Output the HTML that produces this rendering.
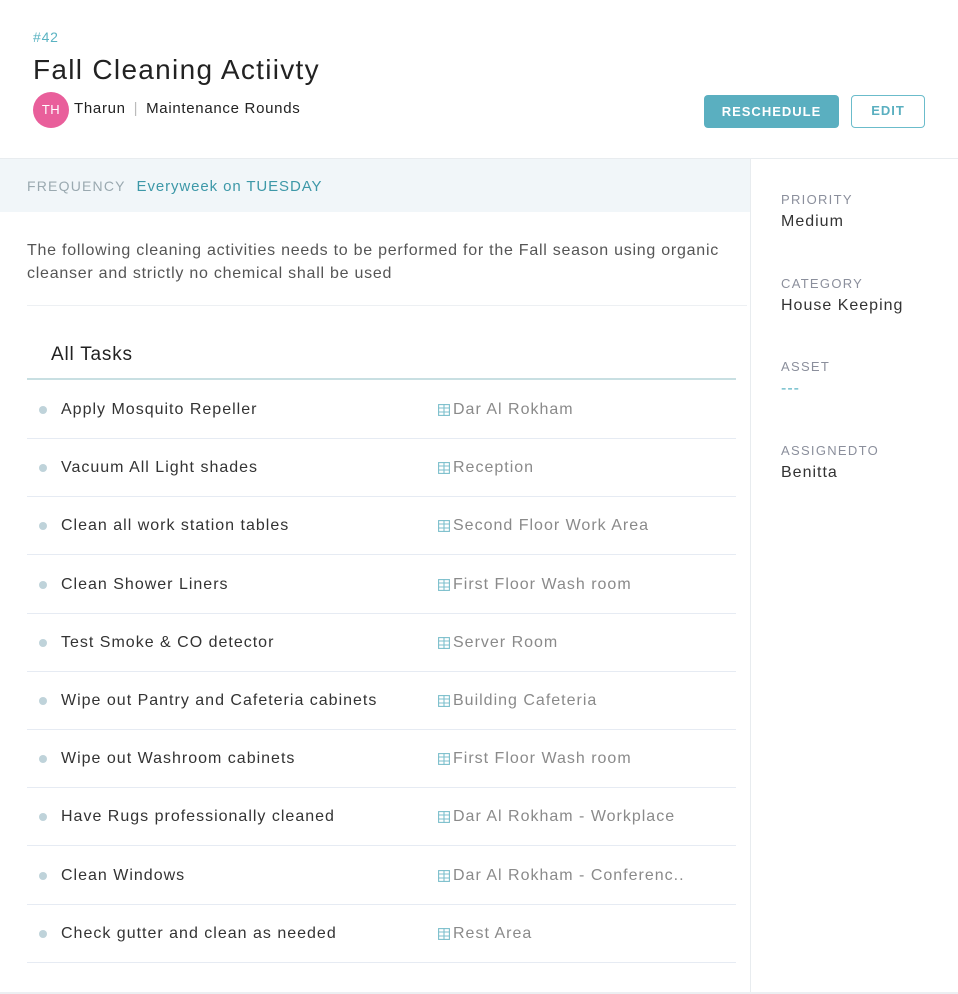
<!DOCTYPE html>
<html><head><style>
*{box-sizing:border-box;margin:0;padding:0}
body{width:958px;height:994px;background:#fff;font-family:"Liberation Sans",sans-serif;position:relative;overflow:hidden;color:#333}
.a{position:absolute}
.row{position:absolute;left:27px;width:709px;height:58px;border-bottom:1px solid #e6ebf3}
.row .d{position:absolute;left:12px;top:25px;width:8px;height:8px;border-radius:50%;background:#bfd3da}
.row .t{position:absolute;left:34px;top:20px;font-size:16px;color:#333;letter-spacing:1px}
.row .l{position:absolute;top:20px;font-size:16px;color:#8a8a8a;letter-spacing:1px}
.row svg{position:absolute;left:411px;top:23px}
.lab{position:absolute;left:781px;font-size:13px;color:#8b8f9c;letter-spacing:1.3px}
.val{position:absolute;left:781px;font-size:16px;color:#333;letter-spacing:1px}
</style></head><body>
<div class="a" style="left:33px;top:29px;font-size:14px;color:#5ab3c2;letter-spacing:.8px">#42</div>
<div class="a" style="left:33px;top:54px;font-size:28px;color:#222;letter-spacing:1.3px">Fall Cleaning Actiivty</div>
<div class="a" style="left:33px;top:92px;width:36px;height:36px;border-radius:50%;background:#e95f9b;color:#fff;font-size:13px;line-height:36px;text-align:center;letter-spacing:.5px">TH</div>
<div class="a" style="left:74px;top:100px;font-size:15px;color:#222;letter-spacing:.7px">Tharun <span style="color:#bbb;margin:0 3px">|</span> Maintenance Rounds</div>
<div class="a" style="left:704px;top:95px;width:135px;height:33px;background:#5aafc0;border-radius:4px;color:#fff;font-size:13px;font-weight:bold;letter-spacing:1px;line-height:33px;text-align:center">RESCHEDULE</div>
<div class="a" style="left:851px;top:95px;width:74px;height:33px;border:1.5px solid #6bbccb;border-radius:4px;color:#5aafc0;font-size:13px;font-weight:bold;letter-spacing:1px;line-height:30px;text-align:center">EDIT</div>
<div class="a" style="left:0;top:158px;width:958px;height:1px;background:#e8ecef"></div>
<div class="a" style="left:750px;top:159px;width:1px;height:835px;background:#e8ecef"></div>
<div class="a" style="left:0;top:992px;width:958px;height:2px;background:#eceff2"></div>
<div class="a" style="left:0;top:159px;width:750px;height:53px;background:#f1f6f9"></div>
<div class="a" style="left:27px;top:178px;font-size:14px;color:#9aa9b0;letter-spacing:1.2px">FREQUENCY <span style="color:#3d98a8;letter-spacing:.9px;margin-left:6px;font-size:15px">Everyweek on TUESDAY</span></div>
<div class="a" style="left:27px;top:239px;width:722px;font-size:16px;line-height:23px;color:#555;letter-spacing:.75px">The following cleaning activities needs to be performed for the Fall season using organic cleanser and strictly no chemical shall be used</div>
<div class="a" style="left:27px;top:305px;width:720px;height:1px;background:#edf0f3"></div>
<div class="a" style="left:51px;top:344px;font-size:19px;color:#222;letter-spacing:.8px">All Tasks</div>
<div class="a" style="left:27px;top:378px;width:709px;height:2px;background:#c8dfe2"></div>
<div id="rows"></div>
<script>
var d=[["Apply Mosquito Repeller","Dar Al Rokham"],["Vacuum All Light shades","Reception"],["Clean all work station tables","Second Floor Work Area"],["Clean Shower Liners","First Floor Wash room"],["Test Smoke &amp; CO detector","Server Room"],["Wipe out Pantry and Cafeteria cabinets","Building Cafeteria"],["Wipe out Washroom cabinets","First Floor Wash room"],["Have Rugs professionally cleaned","Dar Al Rokham - Workplace"],["Clean Windows","Dar Al Rokham - Conferenc.."],["Check gutter and clean as needed","Rest Area"]];
var h="";d.forEach(function(r,i){var y=381+i*58.2;h+='<div class="row" style="top:'+y+'px"><div class="d"></div><div class="t">'+r[0]+'</div><svg width="12" height="12" viewBox="0 0 12 12" fill="none" stroke="#7cbfcc" stroke-width="1.1"><rect x="0.6" y="0.6" width="10.8" height="10.8"/><path d="M6 0v12M0 4h12M0 8h12"/></svg><div class="l" style="left:426px">'+r[1]+'</div></div>'});
document.getElementById("rows").innerHTML=h;
</script>
<div class="lab" style="top:192px">PRIORITY</div><div class="val" style="top:213px">Medium</div>
<div class="lab" style="top:276px">CATEGORY</div><div class="val" style="top:297px">House Keeping</div>
<div class="lab" style="top:359px">ASSET</div><div class="val" style="top:380px;color:#5ab3c2">---</div>
<div class="lab" style="top:443px">ASSIGNEDTO</div><div class="val" style="top:464px">Benitta</div>
</body></html>
